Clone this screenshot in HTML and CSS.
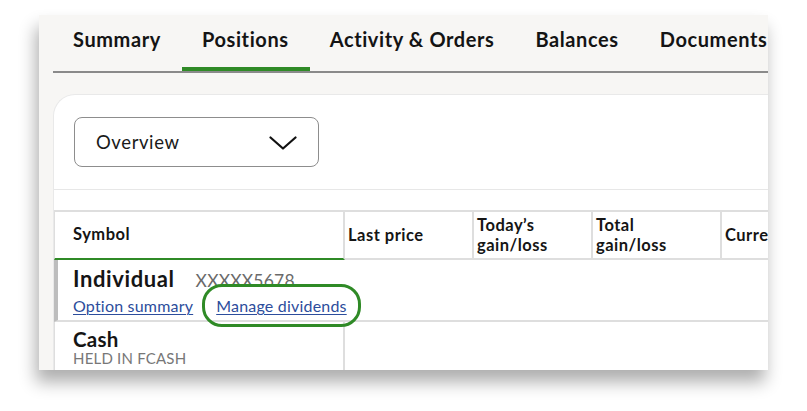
FILE: index.html
```html
<!DOCTYPE html>
<html lang="en">
<head>
<meta charset="utf-8">
<title>Positions</title>
<link rel="stylesheet" href="styles.css">
</head>
<body>
<div class="card">
  <nav class="tabs">
    <div class="tab">Summary</div>
    <div class="tab active">Positions</div>
    <div class="tab">Activity &amp; Orders</div>
    <div class="tab">Balances</div>
    <div class="tab">Documents</div>
  </nav>
  <section class="panel">
    <div class="toolbar">
      <div class="select">
        <span class="select-label">Overview</span>
        <svg class="chevron" width="28" height="14" viewBox="0 0 28 14" aria-hidden="true">
          <path d="M1.5 1.5 L14 12.5 L26.5 1.5" fill="none" stroke="#111" stroke-width="2.2" stroke-linecap="round" stroke-linejoin="round"/>
        </svg>
      </div>
    </div>
    <div class="table">
      <div class="th th-symbol">Symbol</div>
      <div class="th">Last price</div>
      <div class="th"><span class="th-lines">Today’s<br>gain/loss</span></div>
      <div class="th"><span class="th-lines">Total<br>gain/loss</span></div>
      <div class="th th-last">Current value</div>

      <div class="account-row">
        <div class="account-title">
          <span class="account-name">Individual</span>
          <span class="account-num">XXXXX5678</span>
        </div>
        <div class="account-links">
          <a class="link" href="#">Option summary</a>
          <a class="link link-highlight" href="#">Manage dividends</a>
        </div>
      </div>

      <div class="td td-symbol">
        <div class="cash-name">Cash</div>
        <div class="cash-sub">HELD IN FCASH</div>
      </div>
      <div class="td td-rest"></div>
    </div>
  </section>
</div>
</body>
</html>
```

FILE: styles.css
```css
* { box-sizing: border-box; }

html, body {
  margin: 0;
  padding: 0;
  background: #ffffff;
}

body {
  font-family: Lato, "Open Sans", "Liberation Sans", sans-serif;
  color: #151515;
  width: 807px;
  height: 411px;
  overflow: hidden;
}

.card {
  margin: 15px 0 0 39px;
  width: 729px;
  height: 355px;
  background: #f7f6f4;
  padding-left: 14px;
  overflow: hidden;
  box-shadow: -3px 12px 16px rgba(0, 0, 0, 0.32);
}

.tabs {
  display: flex;
  height: 58px;
  border-bottom: 2px solid #8a8a8a;
  white-space: nowrap;
}

.tab {
  height: 56px;
  padding: 12px 21px 0 20px;
  font-size: 20px;
  font-weight: 700;
  line-height: 24px;
  letter-spacing: 0.6px;
  border-bottom: 4px solid transparent;
  color: #141414;
}

.tab.active {
  border-bottom-color: #2f8a26;
}

.panel {
  margin-top: 21px;
  background: #ffffff;
  border-top: 1px solid #e9e9e9;
  border-left: 1px solid #e9e9e9;
  border-top-left-radius: 22px;
  height: 300px;
  width: 760px;
}

.toolbar {
  padding: 22px 0 22px 20px;
  border-bottom: 1px solid #e7e7e7;
}

.select {
  width: 245px;
  height: 50px;
  border: 1.5px solid #8d8d8d;
  border-radius: 8px;
  display: flex;
  align-items: center;
  justify-content: space-between;
  padding: 0 21px 0 21px;
}

.select-label {
  font-size: 18.5px;
  letter-spacing: 0.6px;
  color: #1a1a1a;
}

.chevron {
  display: block;
  margin-top: 1px;
}

.table {
  margin-top: 20px;
  display: grid;
  grid-template-columns: 291px 129px 119px 129px 92px;
  border-top: 2px solid #dedede;
}

.th {
  height: 48px;
  border-right: 2px solid #dedede;
  border-bottom: 2px solid #dedede;
  padding: 0 3px;
  display: flex;
  align-items: center;
  font-size: 16.5px;
  font-weight: 700;
  line-height: 20px;
  letter-spacing: 0.5px;
  white-space: nowrap;
  overflow: hidden;
}

.th-lines {
  display: block;
  line-height: 20px;
}

.th-symbol {
  padding-left: 18px;
  padding-bottom: 2px;
  border-left: 1px solid #dedede;
  border-bottom-color: #2f8a26;
}

.th-last {
  border-right: none;
}

.account-row {
  grid-column: 1 / -1;
  height: 62px;
  border-left: 4px solid #bdbdbd;
  border-bottom: 2px solid #dedede;
  padding: 5px 0 0 15px;
  position: relative;
}

.account-title {
  display: flex;
  align-items: baseline;
  gap: 21px;
  height: 27px;
}

.account-name {
  font-size: 22px;
  font-weight: 700;
  letter-spacing: 0.6px;
}

.account-num {
  font-size: 17.5px;
  color: #6a6a6a;
  letter-spacing: 0.2px;
}

.account-links {
  display: flex;
  gap: 23px;
  margin-top: 4px;
}

.link {
  font-size: 16px;
  letter-spacing: 0.2px;
  color: #2c4d9c;
  text-decoration: underline;
  text-underline-offset: 2px;
  text-decoration-thickness: 1px;
}

.link-highlight {
  position: relative;
}

.link-highlight::after {
  content: "";
  position: absolute;
  left: -14px;
  top: -12px;
  right: -14px;
  bottom: -12px;
  border: 3px solid #2f8a26;
  border-radius: 20px;
}

.td {
  height: 49px;
}

.td-symbol {
  border-left: 1px solid #dedede;
  border-right: 2px solid #dedede;
  padding: 7px 0 0 18px;
}

.td-rest {
  grid-column: 2 / -1;
}

.cash-name {
  font-size: 20.5px;
  font-weight: 700;
  letter-spacing: 0.3px;
  line-height: 21px;
}

.cash-sub {
  font-size: 15px;
  color: #777777;
  line-height: 16px;
  letter-spacing: 0.2px;
}
```
